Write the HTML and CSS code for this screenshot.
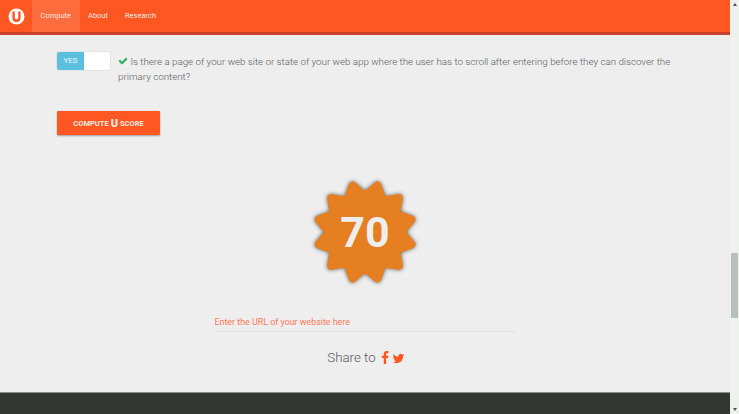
FILE: index.html
```html
<!DOCTYPE html>
<html lang="en">
<head>
    <meta charset="UTF-8">
    <meta name="viewport" content="width=device-width, initial-scale=1.0">
    <title>U Score</title>
    <link rel="stylesheet" href="styles.css">
</head>
<body>
    <div class="page">
        <!-- Top menu -->
        <div class="navbar">
            <a href="#" class="logo">
                <svg width="17" height="17" viewBox="0 0 17 17">
                    <circle cx="8.5" cy="8.5" r="8" fill="#ffffff"/>
                    <path d="M5.6 3.6v6.2q0 3 2.9 3t2.9-3V3.6" fill="none" stroke="#ff5722" stroke-width="2.4"/>
                </svg>
            </a>
            <a href="#" class="nav-link active">Compute</a>
            <a href="#" class="nav-link">About</a>
            <a href="#" class="nav-link">Research</a>
        </div>

        <div class="content">
            <!-- Question row -->
            <div class="question">
                <div class="toggle">
                    <span class="toggle-on">YES</span>
                    <span class="toggle-off"></span>
                </div>
                <p>
                    <svg class="check" width="10" height="10" viewBox="0 0 1792 1792"><path d="M1671 566q0 40-28 68l-724 724-136 136q-28 28-68 28t-68-28l-136-136-362-362q-28-28-28-68t28-68l136-136q28-28 68-28t68 28l294 295 656-657q28-28 68-28t68 28l136 136q28 28 28 68z"/></svg>
                    Is there a page of your web site or state of your web app where the user has to scroll after entering before they can discover the primary content?
                </p>
            </div>

            <a href="#" class="compute-button">COMPUTE <span class="big-u">U</span> SCORE</a>

            <!-- Score badge -->
            <div class="badge">
                <svg width="120" height="120" viewBox="0 0 120 120">
                    <polygon class="badge-star" points="60,24 72.4,13.6 78,28.8 93.9,26.1 91.2,42 106.4,47.6 96,60 106.4,72.4 91.2,78 93.9,93.9 78,91.2 72.4,106.4 60,96 47.6,106.4 42,91.2 26.1,93.9 28.8,78 13.6,72.4 24,60 13.6,47.6 28.8,42 26.1,26.1 42,28.8 47.6,13.6"/>
                </svg>
                <span class="badge-score">70</span>
            </div>

            <input class="url-input" type="text" placeholder="Enter the URL of your website here">

            <div class="share">
                Share to
                <svg class="share-f" width="14" height="14" viewBox="0 0 1792 1792"><path d="M1343 12v264h-157q-86 0-116 36t-30 108v189h293l-39 296h-254v759h-306v-759h-255v-296h255v-218q0-186 104-288.500t277-102.500q147 0 228 12z"/></svg>
                <svg class="share-t" width="13" height="13" viewBox="0 0 1792 1792"><path d="M1684 408q-67 98-162 167 1 14 1 42 0 130-38 259.500t-115.500 248.500-184.500 210.500-258 146-323 54.500q-271 0-496-145 35 4 78 4 225 0 401-138-105-2-188-64.500t-114-159.500q33 5 61 5 43 0 85-11-112-23-185.500-111.500t-73.500-205.500v-4q68 38 146 41-66-44-105-115t-39-154q0-88 44-163 121 149 294.500 238.500t371.500 99.500q-8-38-8-74 0-134 94.500-228.500t228.500-94.500q140 0 236 102 109-21 205-78-37 115-142 178 92-10 184-50z"/></svg>
            </div>
        </div>

        <div class="footer"></div>
    </div>

    <!-- Window scrollbar -->
    <div class="scrollbar">
        <span class="arrow-up"></span>
        <div class="track"><div class="thumb"></div></div>
        <span class="arrow-down"></span>
    </div>
</body>
</html>
```

FILE: styles.css
```css
html, body {
    height: 100%;
}
body {
    font-family: "Roboto", sans-serif;
    background-color: #eeeeee;
    color: #596064;
    margin: 0;
    padding: 0;
    display: flex;
    overflow: hidden;
}
.page {
    flex: 1;
    min-width: 0;
    display: flex;
    flex-direction: column;
}
.navbar {
    background-color: #ff5722;
    border-bottom: 3px solid #c8402a;
    display: flex;
    align-items: stretch;
    height: 32px;
    flex-shrink: 0;
}
.logo {
    display: flex;
    align-items: center;
    padding: 0 7px 0 8px;
}
.nav-link {
    color: #ffe9e0;
    text-decoration: none;
    font-size: 7.5px;
    line-height: 32px;
    padding: 0 8.5px;
}
.nav-link.active {
    background-color: #ff6c3d;
}
.content {
    flex: 1;
    display: flex;
    flex-direction: column;
    padding: 0 57px;
}
.question {
    display: flex;
    gap: 8px;
    margin-top: 17px;
}
.question p {
    margin: 0;
    font-size: 9.75px;
    font-weight: 300;
    line-height: 15px;
    padding-top: 2px;
    flex: 1;
}
.check {
    fill: #27ae60;
    vertical-align: -1px;
}
.toggle {
    display: flex;
    width: 53px;
    height: 18px;
    flex-shrink: 0;
    border-radius: 2px;
    overflow: hidden;
    box-shadow: 0 0 0 1px #e4e4e4;
}
.toggle-on {
    width: 27px;
    background-color: #5bc0de;
    color: #e8f6fa;
    font-size: 8px;
    line-height: 18px;
    text-align: center;
}
.toggle-off {
    flex: 1;
    background-color: #ffffff;
}
.compute-button {
    align-self: flex-start;
    margin-top: 27px;
    width: 103px;
    height: 24px;
    display: flex;
    align-items: center;
    justify-content: center;
    gap: 2px;
    background-color: #ff5722;
    color: #ffe9e0;
    text-decoration: none;
    font-size: 7.5px;
    font-weight: 700;
    border-radius: 1px;
    box-shadow: 0 1px 2px rgba(0, 0, 0, 0.35);
}
.big-u {
    font-size: 11px;
    font-weight: 900;
}
.badge {
    align-self: center;
    display: grid;
    place-items: center;
    margin-top: 37px;
}
.badge svg, .badge-score {
    grid-area: 1 / 1;
}
.badge-star {
    fill: #e67e22;
    stroke: #e67e22;
    stroke-width: 8;
    stroke-linejoin: round;
    filter: drop-shadow(0 0 2px rgba(0, 0, 0, 0.6));
}
.badge-score {
    color: #eeeeee;
    font-size: 43px;
    font-weight: 700;
}
.url-input {
    align-self: center;
    width: 301px;
    height: 19px;
    box-sizing: border-box;
    margin: 21px 0 0;
    padding: 0;
    border: none;
    border-bottom: 1px solid #e1e1e1;
    background: none;
    font-family: "Roboto", sans-serif;
    font-size: 8.9px;
    outline: none;
}
.url-input::placeholder {
    color: #ff7a55;
    opacity: 1;
}
.share {
    display: flex;
    align-items: center;
    justify-content: center;
    gap: 3px;
    margin-top: 16px;
    padding-left: 2px;
    font-size: 13.3px;
    font-weight: 300;
    line-height: 20px;
}
.share svg {
    fill: #ff5722;
}
.share-f {
    margin: 0 -3px 0 -1px;
}
.footer {
    height: 22px;
    flex-shrink: 0;
    background-color: #333532;
    border-top: 1px solid #8a8a8a;
    box-sizing: border-box;
}
.scrollbar {
    width: 9px;
    flex-shrink: 0;
    background-color: #eff1ef;
    display: flex;
    flex-direction: column;
    align-items: center;
}
.track {
    flex: 1;
    width: 100%;
    padding-top: 244px;
    box-sizing: border-box;
}
.thumb {
    width: 7px;
    height: 65px;
    margin-left: 1px;
    background-color: #b9bfb9;
}
.arrow-up, .arrow-down {
    width: 0;
    height: 0;
    margin: 3px 0;
    border-left: 2px solid transparent;
    border-right: 2px solid transparent;
}
.arrow-up {
    border-bottom: 3px solid #505050;
}
.arrow-down {
    border-top: 3px solid #505050;
}
```
